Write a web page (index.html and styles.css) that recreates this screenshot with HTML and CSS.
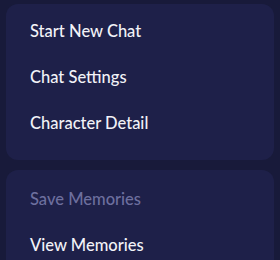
FILE: index.html
```html
<!DOCTYPE html>
<html>
<head>
<meta charset="utf-8">
<link rel="stylesheet" href="styles.css">
</head>
<body>
<div class="menu">
  <div class="card card-top">
    <div class="item">Start New Chat</div>
    <div class="item">Chat Settings</div>
    <div class="item">Character Detail</div>
  </div>
  <div class="card card-bottom">
    <div class="item disabled">Save Memories</div>
    <div class="item">View Memories</div>
  </div>
</div>
</body>
</html>
```
FILE: styles.css
```css
html, body {
  margin: 0;
  padding: 0;
  background: #181a3a;
  width: 280px;
  height: 260px;
  overflow: hidden;
}
.menu {
  display: flex;
  flex-direction: column;
  gap: 10px;
  padding: 4px 6px 0 6px;
}
.card {
  background: #1e2049;
  border-radius: 12px;
  display: flex;
  flex-direction: column;
}
.card-top {
  padding: 4px 0 14px 0;
  height: 156px;
  box-sizing: border-box;
}
.card-bottom {
  padding: 6px 0 10px 0;
}
.item {
  height: 46px;
  display: flex;
  align-items: center;
  padding-left: 24px;
  font-family: Lato, "Noto Sans", sans-serif;
  font-size: 16.5px;
  font-weight: 500;
  color: #f2f2f7;
}
.item.disabled {
  color: #6d6f9e;
}
```
